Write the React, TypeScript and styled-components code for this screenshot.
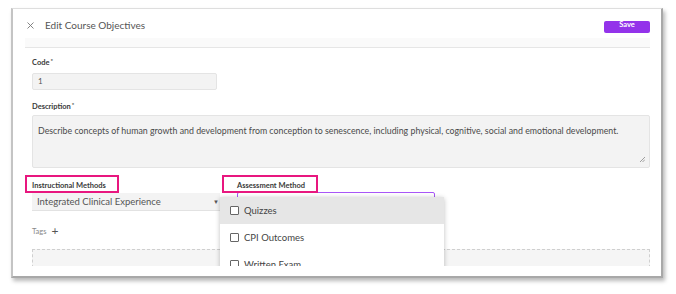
import React from "react";
import styled, { createGlobalStyle } from "styled-components";

const GlobalStyle = createGlobalStyle`
  html, body {
    margin: 0;
    padding: 0;
    background: #ffffff;
  }
  body {
    font-family: Lato, "Open Sans", sans-serif;
    color: #333;
  }
`;

const Page = styled.div`
  width: 676px;
  height: 294px;
  padding: 8px 0 0 11px;
  box-sizing: border-box;
`;

const Frame = styled.div`
  width: 652px;
  height: 270px;
  box-sizing: border-box;
  border-left: 2px solid #c4c4c4;
  border-top: 1px solid #dedede;
  border-right: 2px solid #a8a8a8;
  border-bottom: 2px solid #a8a8a8;
  box-shadow: 2px 3px 4px rgba(0, 0, 0, 0.28);
  background: #fff;
`;

const Modal = styled.div`
  height: 257px;
  overflow: hidden;
  padding: 0 11px 0 12px;
`;

const Header = styled.div`
  height: 29px;
  display: flex;
  align-items: center;
  padding-left: 1px;
`;

const CloseIcon = styled.svg`
  width: 7px;
  height: 7px;
  margin: 3px 11px 0 1px;
`;

const Title = styled.h1`
  margin: 0;
  font-size: 10px;
  font-weight: 400;
  color: #555;
  flex: 1;
  margin-top: 3px;
`;

const SaveButton = styled.button`
  width: 46px;
  height: 12px;
  margin-top: 6px;
  border: none;
  border-radius: 2px;
  background: #9333ea;
  color: #fff;
  font-family: inherit;
  font-size: 7.5px;
  font-weight: 700;
  line-height: 7px;
  padding: 0 0 5px;
`;

const Band = styled.div`
  height: 9px;
  background: #fafafa;
  border-bottom: 1px solid #e6e6e6;
`;

const Body = styled.div`
  padding: 9px 0 0 7px;
  display: flex;
  flex-direction: column;
`;

const Label = styled.label`
  display: block;
  font-size: 7.5px;
  font-weight: 700;
  color: #3a3a3a;
  height: 11px;
  line-height: 11px;
  sup {
    font-size: 6px;
    margin-left: 1px;
    vertical-align: 2px;
    line-height: 0;
  }
`;

const Field = styled.div<{ $mt?: number }>`
  margin-top: ${p => p.$mt ?? 0}px;
  display: flex;
  flex-direction: column;
`;

const Input = styled.div<{ $w: number }>`
  margin-top: 5px;
  width: ${p => p.$w}px;
  height: 17px;
  box-sizing: border-box;
  background: #f3f3f3;
  border: 1px solid #e4e4e4;
  border-radius: 2px;
  font-size: 8px;
  line-height: 15px;
  padding-left: 5px;
  color: #555;
`;

const TextArea = styled.div`
  margin-top: 3px;
  width: 618px;
  height: 53px;
  box-sizing: border-box;
  background: #f3f3f3;
  border: 1px solid #e4e4e4;
  border-radius: 2px;
  font-size: 8.8px;
  color: #4a4a4a;
  padding: 9px 0 0 5px;
  position: relative;
  white-space: nowrap;
`;

const Grip = styled.svg`
  position: absolute;
  right: 4px;
  bottom: 5px;
`;

const Row = styled.div`
  margin-top: 7px;
  display: flex;
  gap: 17px;
`;

const Column = styled.div<{ $w: number }>`
  width: ${p => p.$w}px;
  position: relative;
  display: flex;
  flex-direction: column;
`;

const Mark = styled.span<{ $l: number; $r: number }>`
  position: relative;
  align-self: flex-start;
  height: 18px;
  display: flex;
  align-items: center;
  padding-top: 2px;
  box-sizing: border-box;
  &::after {
    content: "";
    position: absolute;
    top: 0;
    bottom: 0;
    left: -${p => p.$l}px;
    right: -${p => p.$r}px;
    border: 2px solid #e8177f;
  }
`;

const Select = styled.div`
  width: 188px;
  height: 18px;
  box-sizing: border-box;
  background: #f3f3f3;
  border-bottom: 1px solid #e2e2e2;
  display: flex;
  align-items: center;
  justify-content: space-between;
  padding: 0 1px 0 5px;
  font-size: 9.5px;
  color: #555;
`;

const Caret = styled.span`
  font-size: 6px;
  color: #555;
`;

const FocusInput = styled.div`
  margin-top: -1px;
  width: 198px;
  height: 18px;
  box-sizing: border-box;
  border: 1px solid #a855f7;
  border-radius: 2px;
`;

const Menu = styled.ul`
  position: absolute;
  top: 22px;
  left: -17px;
  width: 224px;
  margin: 0;
  padding: 0;
  list-style: none;
  background: #fff;
  box-shadow: 0 1px 5px rgba(0, 0, 0, 0.25);
  border-radius: 2px;
  z-index: 2;
`;

const MenuItem = styled.li<{ $active?: boolean }>`
  height: 27px;
  display: flex;
  align-items: center;
  padding-left: 10px;
  gap: 5px;
  background: ${p => (p.$active ? "#e6e6e6" : "#fff")};
  font-size: 9.5px;
  color: #444;
`;

const Box = styled.span`
  width: 9px;
  height: 9px;
  box-sizing: border-box;
  border: 1px solid #666;
  border-radius: 1px;
  background: #fff;
`;

const Tags = styled.div`
  margin-top: 14px;
  display: flex;
  align-items: center;
  gap: 5px;
  font-size: 7.5px;
  color: #888;
  height: 12px;
`;

const Plus = styled.span`
  font-size: 12px;
  color: #555;
  line-height: 1;
`;

const DropZone = styled.div`
  margin-top: 12px;
  width: 618px;
  height: 40px;
  box-sizing: border-box;
  background: #f5f5f5;
  border: 1px dashed #cfcfcf;
`;

const methods = ["Quizzes", "CPI Outcomes", "Written Exam"];

export default function App() {
  return (
    <>
      <GlobalStyle />
      <Page>
        <Frame>
          <Modal>
            <Header>
              <CloseIcon viewBox="0 0 7 7">
                <path d="M0.5 0.5 L6.5 6.5 M6.5 0.5 L0.5 6.5" stroke="#777" strokeWidth="0.9" />
              </CloseIcon>
              <Title>Edit Course Objectives</Title>
              <SaveButton>Save</SaveButton>
            </Header>
            <Band />
            <Body>
              <Field>
                <Label>
                  Code<sup>*</sup>
                </Label>
                <Input $w={185}>1</Input>
              </Field>
              <Field $mt={11}>
                <Label>
                  Description<sup>*</sup>
                </Label>
                <TextArea>
                  Describe concepts of human growth and development from conception to
                  senescence, including physical, cognitive, social and emotional development.
                  <Grip width="6" height="6" viewBox="0 0 6 6">
                    <path d="M1 6 L6 1 M3.5 6 L6 3.5" stroke="#888" strokeWidth="0.8" />
                  </Grip>
                </TextArea>
              </Field>
              <Row>
                <Column $w={188}>
                  <Mark $l={7} $r={13}>
                    <Label as="span">Instructional Methods</Label>
                  </Mark>
                  <Select>
                    Integrated Clinical Experience
                    <Caret>▼</Caret>
                  </Select>
                </Column>
                <Column $w={198}>
                  <Mark $l={15} $r={13}>
                    <Label as="span">Assessment Method</Label>
                  </Mark>
                  <FocusInput />
                  <Menu>
                    {methods.map((m, i) => (
                      <MenuItem key={m} $active={i === 0}>
                        <Box />
                        {m}
                      </MenuItem>
                    ))}
                  </Menu>
                </Column>
              </Row>
              <Tags>
                Tags <Plus>+</Plus>
              </Tags>
              <DropZone />
            </Body>
          </Modal>
        </Frame>
      </Page>
    </>
  );
}
